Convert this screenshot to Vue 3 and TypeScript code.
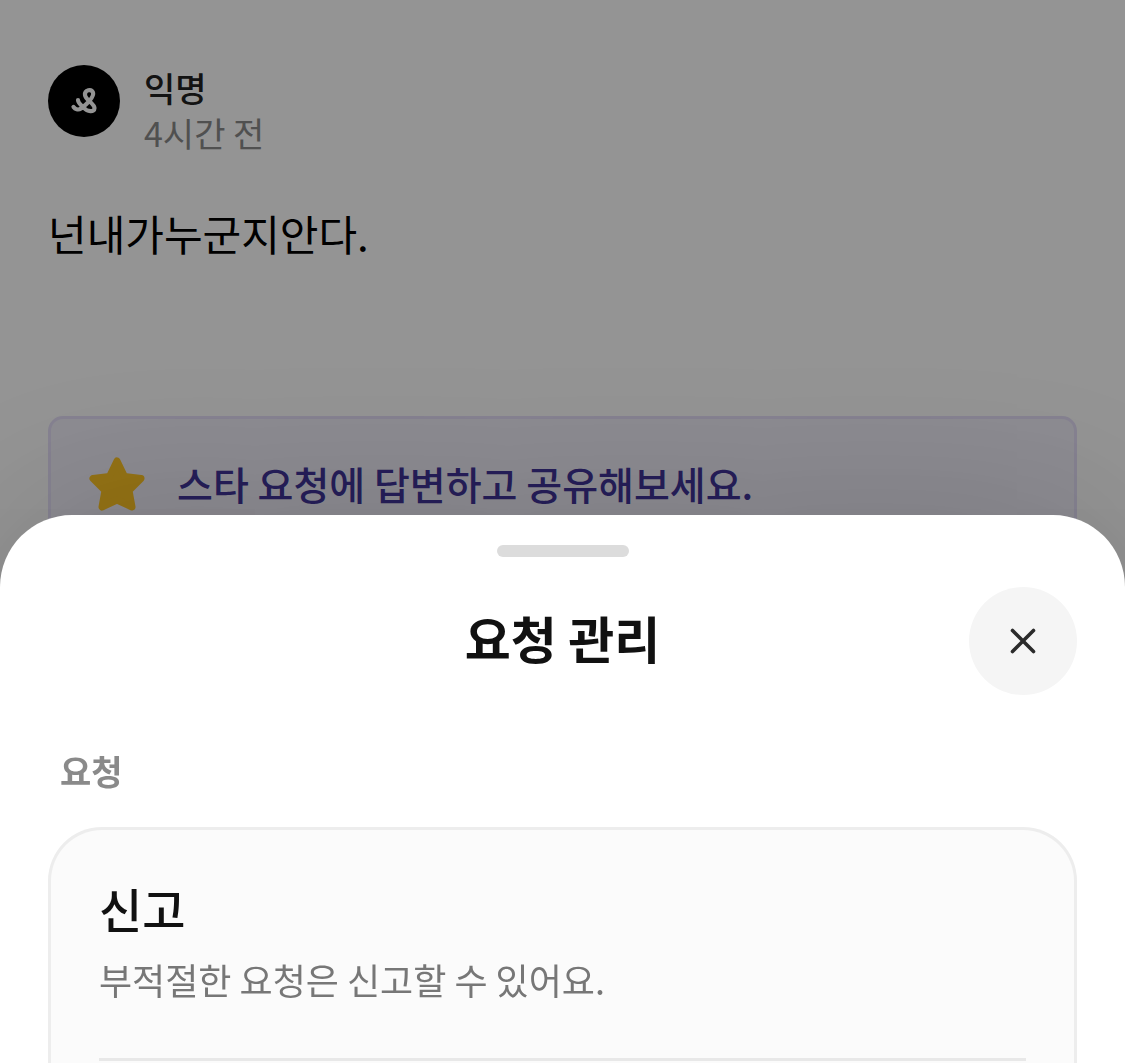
<script setup lang="ts">
interface Action {
  title: string
  description: string
}

const post = { author: '익명', time: '4시간 전', body: '넌내가누군지안다.' }
const notice = '스타 요청에 답변하고 공유해보세요.'
const actions: Action[] = [
  { title: '신고', description: '부적절한 요청은 신고할 수 있어요.' },
]
</script>

<template>
  <div class="screen">
    <main class="page">
      <article class="post">
        <header class="author">
          <svg class="avatar" viewBox="0 0 72 72" aria-hidden="true">
            <circle cx="36" cy="36" r="36" fill="#000" />
            <path
              transform="translate(16 17)"
              d="M14 18C14 21 17 23.500 20 26C23 29.500 30.500 31 30.500 26C30.500 21.500 21.500 18 21 13C20.500 7.500 27.500 6.500 29 10.500C30.500 15 22 23 17 26.500C14 28.500 11 27 9.500 25"
              fill="none"
              stroke="#fff"
              stroke-width="4.200"
              stroke-linecap="round"
              stroke-linejoin="round"
            />
          </svg>
          <div class="meta">
            <span class="name">{{ post.author }}</span>
            <span class="time">{{ post.time }}</span>
          </div>
        </header>
        <p class="body">{{ post.body }}</p>
      </article>
      <div class="notice">
        <svg class="star" viewBox="0 0 56 56" aria-hidden="true">
          <path
            d="M28 4L35.500 19.500L52 21.500L40 33.500L43 50L28 43L13 50L16 33.500L4 21.500L20.500 19.500Z"
            fill="#ffc524"
            stroke="#ffc524"
            stroke-width="7"
            stroke-linejoin="round"
          />
        </svg>
        <span class="notice-text">{{ notice }}</span>
      </div>
    </main>

    <div class="scrim">
      <section class="sheet" role="dialog" aria-labelledby="sheet-title">
        <div class="handle"></div>
        <header class="sheet-head">
          <h1 id="sheet-title">요청 관리</h1>
          <button class="close" type="button" aria-label="닫기">
            <svg viewBox="0 0 36 36" aria-hidden="true">
              <path d="M7.500 7.500L28.500 28.500M28.500 7.500L7.500 28.500" fill="none" stroke="#2b2b2b" stroke-width="3.600" stroke-linecap="round" />
            </svg>
          </button>
        </header>
        <h2>요청</h2>
        <div class="card">
          <button v-for="action in actions" :key="action.title" class="action" type="button">
            <span class="action-title">{{ action.title }}</span>
            <span class="action-text">{{ action.description }}</span>
          </button>
        </div>
      </section>
    </div>
  </div>
</template>

<style>
body {
  margin: 0;
  background: #fff;
}
</style>

<style scoped>
.screen {
  font-family: "Noto Sans CJK KR", sans-serif;
  color: #111;
}

.page {
  display: flex;
  flex-direction: column;
  gap: 153px;
  padding: 65px 48px 0;
}

.author {
  display: flex;
  align-items: flex-start;
  gap: 24px;
}

.avatar {
  flex: none;
  width: 72px;
  height: 72px;
}

.meta {
  display: flex;
  flex-direction: column;
  font-size: 34px;
  line-height: 45px;
}

.name {
  color: #222;
  font-weight: 500;
}

.time {
  color: #8a8a8a;
}

.body {
  margin: 48px 0 0;
  color: #000;
  font-size: 42px;
  line-height: 60px;
}

.notice {
  display: flex;
  align-items: center;
  gap: 32px;
  box-sizing: border-box;
  height: 138px;
  padding: 0 38px;
  border: 3px solid #e6e0fa;
  border-radius: 15px;
  background: #f3f1fb;
  color: #41349a;
  font-size: 39px;
  font-weight: 500;
  line-height: 56px;
}

.notice-text {
  padding-bottom: 4px;
}

.star {
  flex: none;
  width: 56px;
  height: 56px;
}

.scrim {
  position: fixed;
  inset: 0;
  display: flex;
  flex-direction: column;
  justify-content: flex-end;
  overflow: hidden;
  background: rgba(0, 0, 0, 0.42);
}

.sheet {
  padding: 30px 48px 0;
  border-radius: 72px 72px 0 0;
  background: #fff;
  box-shadow: 0 0 180px rgba(0, 0, 0, 0.18);
}

.handle {
  width: 132px;
  height: 12px;
  margin: 0 auto 30px;
  border-radius: 6px;
  background: #dcdcdc;
}

.sheet-head {
  display: grid;
  grid-template-columns: 108px 1fr 108px;
  align-items: center;
}

h1 {
  grid-column: 2;
  margin: 0;
  padding-bottom: 8px;
  font-size: 50px;
  font-weight: 700;
  line-height: 72px;
  text-align: center;
}

.close {
  display: flex;
  align-items: center;
  justify-content: center;
  width: 108px;
  height: 108px;
  padding: 0;
  border: 0;
  border-radius: 50%;
  background: #f5f5f5;
}

.close svg {
  width: 36px;
  height: 36px;
}

h2 {
  margin: 52px 12px 32px;
  color: #8a8a8a;
  font-size: 34px;
  font-weight: 700;
  line-height: 48px;
}

.card {
  padding: 0 48px 2px;
  border: 3px solid #ededed;
  border-bottom: 0;
  border-radius: 54px 54px 0 0;
  background: #fbfbfb;
}

.action {
  display: flex;
  flex-direction: column;
  width: 100%;
  padding: 42px 0 52px;
  border: 0;
  border-bottom: 3px solid #e8e8e8;
  background: none;
  color: inherit;
  font-family: inherit;
  text-align: left;
}

.action-title {
  font-size: 47px;
  font-weight: 500;
  line-height: 72px;
}

.action-text {
  margin-top: 8px;
  color: #777;
  font-size: 36px;
  line-height: 54px;
}
</style>
